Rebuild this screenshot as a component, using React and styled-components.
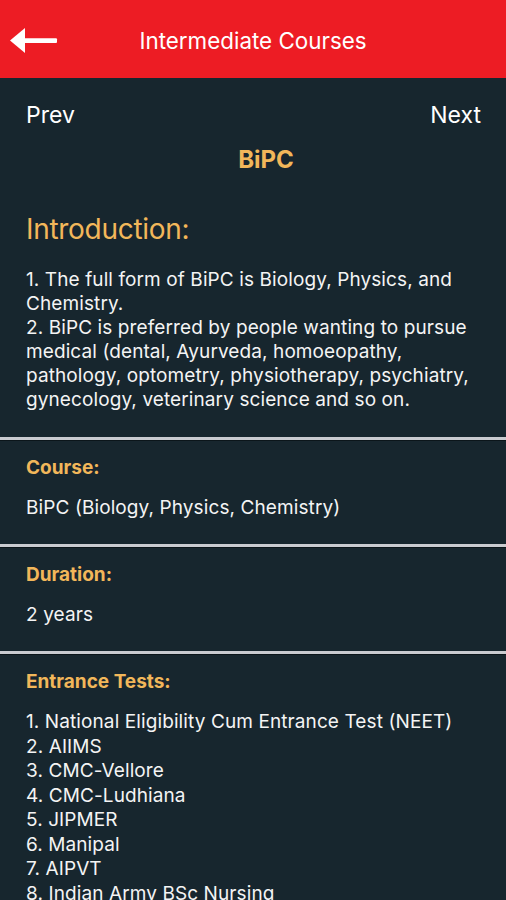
import React from "react";
import styled, { createGlobalStyle } from "styled-components";

const Global = createGlobalStyle`
  html, body { margin: 0; padding: 0; background: #17262e; }
  body { font-family: Inter, "Noto Sans", sans-serif; -webkit-font-smoothing: antialiased; }
  * { box-sizing: border-box; }
`;

const Page = styled.div`
  width: 506px;
  min-height: 900px;
  background: #17262e;
  color: #f4f4f4;
`;

const Header = styled.header`
  height: 78px;
  background: #ed1c24;
  display: flex;
  align-items: center;
  justify-content: center;
  position: relative;
`;

const BackButton = styled.button`
  position: absolute;
  left: 9px;
  top: 26px;
  width: 50px;
  height: 30px;
  padding: 0;
  border: 0;
  background: none;
  display: flex;
  align-items: center;
`;

const Title = styled.h1`
  margin: 2px 0 0;
  font-size: 22.4px;
  font-weight: 400;
  color: #ffffff;
`;

const NavRow = styled.div`
  display: flex;
  justify-content: space-between;
  padding: 24px 25px 0 26px;
`;

const NavLink = styled.span`
  font-size: 23px;
  line-height: 26px;
  color: #ffffff;
`;

const CourseName = styled.h2`
  margin: 19px 0 0;
  padding-left: 26px;
  text-align: center;
  font-size: 24px;
  line-height: 26px;
  font-weight: 700;
  color: #f2b75a;
`;

const Section = styled.section`
  padding: ${(p) => p.$top}px 26px ${(p) => p.$bottom}px;
  border-bottom: ${(p) => (p.$last ? "0" : "3px solid #c9cbd0")};
  box-shadow: ${(p) => (p.$last ? "none" : "0 1px 0 #0b151a")};
`;

const BigHeading = styled.h3`
  margin: 0;
  font-size: 28px;
  line-height: 34px;
  font-weight: 400;
  color: #f2b75a;
  letter-spacing: -0.3px;
`;

const Label = styled.h4`
  margin: 0;
  font-size: 19px;
  line-height: 22px;
  font-weight: 700;
  color: #f2b75a;
`;

const Body = styled.p`
  margin: ${(p) => p.$gap}px 0 0;
  font-size: 19px;
  line-height: ${(p) => p.$lh || 24}px;
  color: #f4f4f4;
  letter-spacing: 0.1px;
  white-space: nowrap;
`;

const Line = styled.span`
  display: block;
`;

const intro = [
  "1. The full form of BiPC is Biology, Physics, and",
  "Chemistry.",
  "2. BiPC is preferred by people wanting to pursue",
  "medical (dental, Ayurveda, homoeopathy,",
  "pathology, optometry, physiotherapy, psychiatry,",
  "gynecology, veterinary science and so on.",
];

const entrance = [
  "1. National Eligibility Cum Entrance Test (NEET)",
  "2. AIIMS",
  "3. CMC-Vellore",
  "4. CMC-Ludhiana",
  "5. JIPMER",
  "6. Manipal",
  "7. AIPVT",
  "8. Indian Army BSc Nursing",
];

export default function App() {
  return (
    <Page>
      <Global />
      <Header>
        <BackButton aria-label="Back">
          <svg width="50" height="30" viewBox="0 0 50 30">
            <path d="M1 14.5 L16 2 L16 27 Z" fill="#fff" />
            <rect x="12" y="12.2" width="36" height="4.8" rx="1" fill="#fff" />
          </svg>
        </BackButton>
        <Title>Intermediate Courses</Title>
      </Header>
      <NavRow>
        <NavLink>Prev</NavLink>
        <NavLink>Next</NavLink>
      </NavRow>
      <CourseName>BiPC</CourseName>
      <Section $top={39} $bottom={25}>
        <BigHeading>Introduction:</BigHeading>
        <Body $gap={22}>
          {intro.map((t) => (
            <Line key={t}>{t}</Line>
          ))}
        </Body>
      </Section>
      <Section $top={17} $bottom={24}>
        <Label>Course:</Label>
        <Body $gap={17}>BiPC (Biology, Physics, Chemistry)</Body>
      </Section>
      <Section $top={17} $bottom={24}>
        <Label>Duration:</Label>
        <Body $gap={17}>2 years</Body>
      </Section>
      <Section $top={17} $bottom={20} $last>
        <Label>Entrance Tests:</Label>
        <Body $gap={17} $lh={24.5}>
          {entrance.map((t) => (
            <Line key={t}>{t}</Line>
          ))}
        </Body>
      </Section>
    </Page>
  );
}
